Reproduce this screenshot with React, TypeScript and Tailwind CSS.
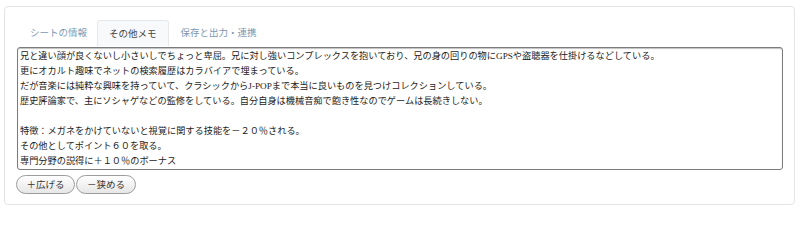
import React from "react";

const memo = [
  "兄と違い顔が良くないし小さいしでちょっと卑屈。兄に対し強いコンプレックスを抱いており、兄の身の回りの物にGPSや盗聴器を仕掛けるなどしている。",
  "更にオカルト趣味でネットの検索履歴はカラバイアで埋まっている。",
  "だが音楽には純粋な興味を持っていて、クラシックからJ-POPまで本当に良いものを見つけコレクションしている。",
  "歴史評論家で、主にソシャゲなどの監修をしている。自分自身は機械音痴で飽き性なのでゲームは長続きしない。",
  "",
  "特徴：メガネをかけていないと視覚に関する技能を－２０％される。",
  "その他としてポイント６０を取る。",
  "専門分野の説得に＋１０％のボーナス",
].join("\n");

export default function App() {
  return (
    <div className="w-[800px] h-[210px] bg-white pt-[6px] pl-[4px] pr-[5px] pb-[5px] font-['Noto_Sans_CJK_JP',sans-serif]">
      <div className="h-full border border-[#e4e4e4] rounded-[4px] bg-white pt-[13px] pl-[12px] pr-[11px] pb-[9px] flex flex-col">
        <div className="flex h-[26px] ml-[1px] text-[9.5px] leading-none">
          <div className="pl-[11px] pr-[9px] flex items-center text-[#7b98b3] border border-transparent">シートの情報</div>
          <div className="px-[11px] flex items-center text-[#444] bg-[#f8f9fa] border border-b-0 border-[#e6e8eb] rounded-t-[3px]">その他メモ</div>
          <div className="px-[11px] flex items-center text-[#7b98b3] border border-transparent">保存と出力・連携</div>
        </div>
        <textarea
          readOnly
          value={memo}
          className="mt-[1px] w-[766px] h-[123px] resize-none overflow-hidden border border-[#7c7c7c] rounded-[3px] shadow-[inset_0_1px_1px_rgba(0,0,0,0.25)] bg-white pl-[2px] pt-[1px] text-[9.2px] leading-[15px] text-[#1c1c1c] font-['Liberation_Serif','Noto_Sans_CJK_JP',serif] outline-none whitespace-pre-wrap"
        />
        <div className="flex gap-[1px] mt-[5px] ml-[-1px]">
          <button className="w-[59px] h-[19px] rounded-full border border-[#9c9c9c] bg-gradient-to-b from-white to-[#e6e6e6] text-[9.5px] leading-none text-[#333] flex items-center justify-center">
            ＋広げる
          </button>
          <button className="w-[60px] h-[19px] rounded-full border border-[#9c9c9c] bg-gradient-to-b from-white to-[#e6e6e6] text-[9.5px] leading-none text-[#333] flex items-center justify-center">
            －狭める
          </button>
        </div>
      </div>
    </div>
  );
}
